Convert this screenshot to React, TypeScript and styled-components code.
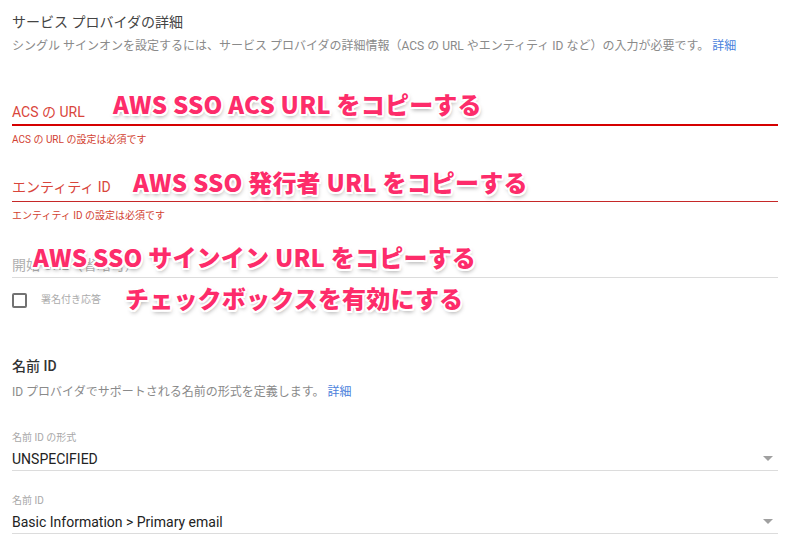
import React from "react";
import styled, { createGlobalStyle } from "styled-components";

const GlobalStyle = createGlobalStyle`
  html, body {
    margin: 0;
    padding: 0;
    background: #ffffff;
  }
  body {
    font-family: Roboto, "Noto Sans CJK JP", sans-serif;
    -webkit-font-smoothing: antialiased;
  }
`;

const Page = styled.div`
  position: relative;
  width: 797px;
  height: 555px;
  box-sizing: border-box;
  padding: 12px 19px 0 12px;
  overflow: hidden;
  display: flex;
  flex-direction: column;
`;

const Heading = styled.div<{ $mt?: number; $weight?: number; $color?: string }>`
  margin-top: ${(p) => p.$mt ?? 0}px;
  font-size: 14px;
  line-height: 20px;
  color: ${(p) => p.$color ?? "#444"};
  font-weight: ${(p) => p.$weight ?? 400};
`;

const Desc = styled.div<{ $mt?: number }>`
  margin-top: ${(p) => p.$mt ?? 0}px;
  font-size: 12px;
  line-height: 18px;
  color: #8a8a8a;
`;

const Link = styled.a`
  color: #4a7fdc;
  text-decoration: none;
  margin-left: 3px;
`;

const FieldRow = styled.div<{
  $mt?: number;
  $pb?: number;
  $h?: number;
  $line?: string;
  $lineW?: number;
}>`
  margin-top: ${(p) => p.$mt ?? 0}px;
  height: ${(p) => p.$h ?? 24}px;
  padding-bottom: ${(p) => p.$pb ?? 0}px;
  display: flex;
  align-items: center;
  justify-content: space-between;
  border-bottom: ${(p) => p.$lineW ?? 1}px solid ${(p) => p.$line ?? "#dcdcdc"};
`;

const FieldLabel = styled.span<{ $color?: string }>`
  font-size: 14px;
  line-height: 20px;
  color: ${(p) => p.$color ?? "#b0b0b0"};
`;

const FieldValue = styled.span`
  font-size: 14px;
  line-height: 20px;
  color: #222;
`;

const SmallText = styled.div<{ $mt?: number; $color?: string }>`
  margin-top: ${(p) => p.$mt ?? 0}px;
  font-size: 10px;
  line-height: 14px;
  color: ${(p) => p.$color ?? "#a8a8a8"};
`;

const CheckRow = styled.div<{ $mt?: number }>`
  margin-top: ${(p) => p.$mt ?? 0}px;
  display: flex;
  align-items: center;
  gap: 14px;
  height: 16px;
`;

const CheckBox = styled.span`
  width: 15px;
  height: 15px;
  box-sizing: border-box;
  border: 2px solid #727272;
  border-radius: 2px;
  flex: none;
`;

const CheckLabel = styled.span`
  font-size: 10px;
  line-height: 14px;
  color: #ababab;
`;

const Arrow = styled.span`
  width: 0;
  height: 0;
  border-left: 5px solid transparent;
  border-right: 5px solid transparent;
  border-top: 5px solid #a0a0a0;
  margin-right: 5px;
  margin-top: -2px;
`;

const Note = styled.div<{ $left: number; $top: number }>`
  position: absolute;
  left: ${(p) => p.$left}px;
  top: ${(p) => p.$top}px;
  font-family: "Noto Sans CJK JP", sans-serif;
  font-weight: 900;
  font-size: 24px;
  line-height: 30px;
  letter-spacing: 0.2px;
  color: #fd2c6a;
  white-space: nowrap;
  text-shadow:
    -1.5px -1.5px 0 #fff,
    1.5px -1.5px 0 #fff,
    -1.5px 1.5px 0 #fff,
    1.5px 1.5px 0 #fff,
    0 -2px 0 #fff,
    0 2px 0 #fff,
    -2px 0 0 #fff,
    2px 0 0 #fff,
    1px 3px 4px rgba(0, 0, 0, 0.35);
`;

export default function App() {
  return (
    <>
      <GlobalStyle />
      <Page>
        <Heading $mt={0}>サービス プロバイダの詳細</Heading>
        <Desc $mt={5}>
          シングル サインオンを設定するには、サービス プロバイダの詳細情報（ACS の URL やエンティティ ID など）の入力が必要です。
          <Link>詳細</Link>
        </Desc>

        <FieldRow $mt={45} $line="#d50000" $lineW={2}>
          <FieldLabel $color="#d9453b">ACS の URL</FieldLabel>
        </FieldRow>
        <SmallText $mt={7} $color="#d23f31">ACS の URL の設定は必須です</SmallText>

        <FieldRow $mt={28} $pb={2} $line="#c62828">
          <FieldLabel $color="#d9453b">エンティティ ID</FieldLabel>
        </FieldRow>
        <SmallText $mt={7} $color="#d23f31">エンティティ ID の設定は必須です</SmallText>

        <FieldRow $mt={30}>
          <FieldLabel>開始 URL（省略可）</FieldLabel>
        </FieldRow>

        <CheckRow $mt={14}>
          <CheckBox />
          <CheckLabel>署名付き応答</CheckLabel>
        </CheckRow>

        <Heading $mt={48} $weight={500} $color="#333">名前 ID</Heading>
        <Desc $mt={7}>
          ID プロバイダでサポートされる名前の形式を定義します。
          <Link>詳細</Link>
        </Desc>

        <SmallText $mt={30}>名前 ID の形式</SmallText>
        <FieldRow $mt={3} $h={22}>
          <FieldValue>UNSPECIFIED</FieldValue>
          <Arrow />
        </FieldRow>

        <SmallText $mt={23}>名前 ID</SmallText>
        <FieldRow $mt={3} $h={22}>
          <FieldValue>Basic Information &gt; Primary email</FieldValue>
          <Arrow />
        </FieldRow>

        <Note $left={113} $top={89}>AWS SSO ACS URL をコピーする</Note>
        <Note $left={133} $top={167}>AWS SSO 発行者 URL をコピーする</Note>
        <Note $left={33} $top={242}>AWS SSO サインイン URL をコピーする</Note>
        <Note $left={125} $top={283}>チェックボックスを有効にする</Note>
      </Page>
    </>
  );
}
